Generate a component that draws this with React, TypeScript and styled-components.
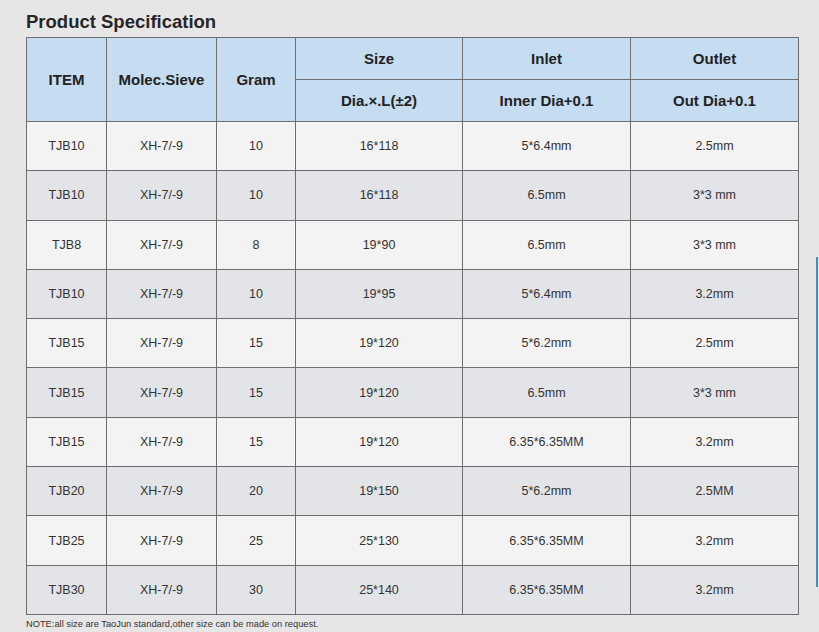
import React from "react";
import styled, { createGlobalStyle } from "styled-components";

const GlobalStyle = createGlobalStyle`
  html, body {
    margin: 0;
    padding: 0;
    background: #e6e6e6;
  }
  body {
    font-family: "Liberation Sans", Arial, sans-serif;
    width: 819px;
    height: 632px;
    overflow: hidden;
  }
`;

const Page = styled.div`
  display: flex;
  flex-direction: row;
  width: 819px;
  height: 632px;
`;

const Main = styled.div`
  display: flex;
  flex-direction: column;
  padding: 11px 0 0 26px;
  width: 772px;
`;

const Title = styled.h1`
  margin: 0 0 4px 0;
  font-size: 18.5px;
  line-height: 22px;
  font-weight: 700;
  color: #262626;
`;

const Table = styled.table`
  border-collapse: collapse;
  table-layout: fixed;
  width: 772px;
  border: 1px solid #7a7a7a;
`;

const HeadCell = styled.th`
  background: #c6dcf1;
  border: 1px solid #6e6e6e;
  color: #222;
  font-size: 15px;
  font-weight: 700;
  height: 41px;
  padding: 0;
  text-align: center;
  vertical-align: middle;
`;

const Row = styled.tr<{ $alt: boolean }>`
  height: 49.3px;
  background: ${(p) => (p.$alt ? "#e2e4e7" : "#f3f3f3")};
`;

const Cell = styled.td`
  border: 1px solid #6e6e6e;
  color: #333;
  font-size: 12.5px;
  padding: 0;
  text-align: center;
  vertical-align: middle;
`;

const Note = styled.p`
  margin: 3px 0 0 0;
  font-size: 9.3px;
  line-height: 12px;
  color: #333;
`;

const Side = styled.div`
  flex: 1;
  display: flex;
  flex-direction: column;
  padding: 257px 0 0 18px;
`;

const SideBar = styled.div`
  width: 2px;
  height: 330px;
  background: #3f8fcf;
`;

const widths = [80, 110, 79, 167, 168, 168];

const rows: string[][] = [
  ["TJB10", "XH-7/-9", "10", "16*118", "5*6.4mm", "2.5mm"],
  ["TJB10", "XH-7/-9", "10", "16*118", "6.5mm", "3*3 mm"],
  ["TJB8", "XH-7/-9", "8", "19*90", "6.5mm", "3*3 mm"],
  ["TJB10", "XH-7/-9", "10", "19*95", "5*6.4mm", "3.2mm"],
  ["TJB15", "XH-7/-9", "15", "19*120", "5*6.2mm", "2.5mm"],
  ["TJB15", "XH-7/-9", "15", "19*120", "6.5mm", "3*3 mm"],
  ["TJB15", "XH-7/-9", "15", "19*120", "6.35*6.35MM", "3.2mm"],
  ["TJB20", "XH-7/-9", "20", "19*150", "5*6.2mm", "2.5MM"],
  ["TJB25", "XH-7/-9", "25", "25*130", "6.35*6.35MM", "3.2mm"],
  ["TJB30", "XH-7/-9", "30", "25*140", "6.35*6.35MM", "3.2mm"],
];

export default function App() {
  return (
    <>
      <GlobalStyle />
      <Page>
        <Main>
          <Title>Product Specification</Title>
          <Table>
            <colgroup>
              {widths.map((w, i) => (
                <col key={i} style={{ width: w }} />
              ))}
            </colgroup>
            <thead>
              <tr>
                <HeadCell rowSpan={2}>ITEM</HeadCell>
                <HeadCell rowSpan={2}>Molec.Sieve</HeadCell>
                <HeadCell rowSpan={2}>Gram</HeadCell>
                <HeadCell>Size</HeadCell>
                <HeadCell>Inlet</HeadCell>
                <HeadCell>Outlet</HeadCell>
              </tr>
              <tr>
                <HeadCell>Dia.×.L(±2)</HeadCell>
                <HeadCell>Inner Dia+0.1</HeadCell>
                <HeadCell>Out Dia+0.1</HeadCell>
              </tr>
            </thead>
            <tbody>
              {rows.map((r, i) => (
                <Row key={i} $alt={i % 2 === 1}>
                  {r.map((c, j) => (
                    <Cell key={j}>{c}</Cell>
                  ))}
                </Row>
              ))}
            </tbody>
          </Table>
          <Note>NOTE:all size are TaoJun standard,other size can be made on request.</Note>
        </Main>
        <Side>
          <SideBar />
        </Side>
      </Page>
    </>
  );
}
